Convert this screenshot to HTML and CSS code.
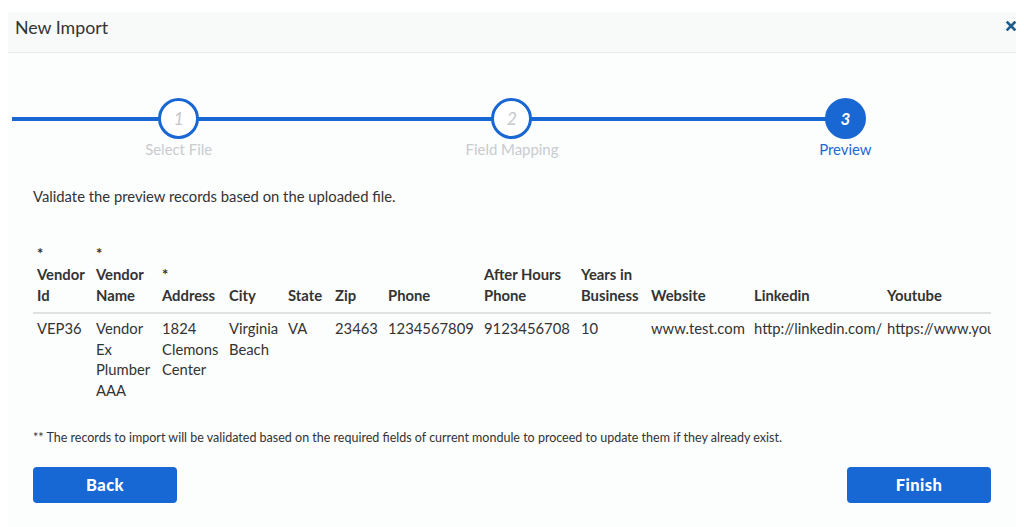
FILE: index.html
```html
<!DOCTYPE html>
<html lang="en">
<head>
<meta charset="utf-8">
<title>New Import</title>
<link rel="stylesheet" href="styles.css">
</head>
<body>
<div class="modal">
  <div class="modal-header">
    <h1 class="title">New Import</h1>
    <button class="close" aria-label="Close">
      <svg width="10" height="10" viewBox="0 0 10 10"><path d="M1.5 1.5 L8.5 8.5 M8.5 1.5 L1.5 8.5" stroke="#1f5c8c" stroke-width="2.6" stroke-linecap="square"/></svg>
    </button>
  </div>
  <div class="modal-body">
    <ol class="stepper">
      <li class="step"><span class="circle">1</span><span class="label">Select File</span></li>
      <li class="step"><span class="circle">2</span><span class="label">Field Mapping</span></li>
      <li class="step active"><span class="circle">3</span><span class="label">Preview</span></li>
    </ol>
    <p class="intro">Validate the preview records based on the uploaded file.</p>
    <div class="table-wrap">
      <table class="preview">
        <colgroup>
          <col class="c59"><col class="c66"><col class="c67"><col class="c59"><col class="c47"><col class="c53"><col class="c96"><col class="c97"><col class="c70"><col class="c103"><col class="c133"><col class="c180">
        </colgroup>
        <thead>
          <tr>
            <th>*<br>Vendor Id</th>
            <th>*<br>Vendor Name</th>
            <th>*<br>Address</th>
            <th>City</th>
            <th>State</th>
            <th>Zip</th>
            <th>Phone</th>
            <th>After Hours Phone</th>
            <th>Years in Business</th>
            <th>Website</th>
            <th>Linkedin</th>
            <th>Youtube</th>
          </tr>
        </thead>
        <tbody>
          <tr>
            <td>VEP36</td>
            <td>Vendor Ex Plumber AAA</td>
            <td>1824 Clemons Center</td>
            <td>Virginia Beach</td>
            <td>VA</td>
            <td>23463</td>
            <td>1234567809</td>
            <td>9123456708</td>
            <td>10</td>
            <td>www.test.com</td>
            <td>http://linkedin.com/</td>
            <td class="nowrap">https://www.youtube.com/</td>
          </tr>
        </tbody>
      </table>
    </div>
    <p class="note">** The records to import will be validated based on the required fields of current mondule to proceed to update them if they already exist.</p>
    <div class="actions">
      <button class="btn">Back</button>
      <button class="btn">Finish</button>
    </div>
  </div>
</div>
</body>
</html>
```
FILE: styles.css
```css
* { box-sizing: border-box; }
html, body { margin: 0; padding: 0; background: #ffffff; }
body {
  font-family: Lato, "Open Sans", "Noto Sans", sans-serif;
  color: #333;
  width: 1024px;
  height: 527px;
  overflow: hidden;
}
.modal {
  margin: 12px 0 0 8px;
  width: 1008px;
  background: #fcfdfd;
  height: 515px;
}
.modal-header {
  height: 41px;
  display: flex;
  align-items: flex-start;
  justify-content: space-between;
  padding: 4px 0 0 7px;
  background: #f8f9f9;
  border-bottom: 1px solid #e9ebeb;
}
.title {
  margin: 0;
  font-size: 17.8px;
  line-height: 22px;
  font-weight: 400;
  color: #333;
}
.close {
  border: 0;
  background: none;
  padding: 0;
  margin: 4px -1px 0 0;
  width: 12px;
  height: 12px;
  display: flex;
  align-items: center;
  justify-content: center;
}
.modal-body {
  padding: 0 25px;
}
.stepper {
  list-style: none;
  margin: 45px -21px 0 -21px;
  padding: 0;
  display: flex;
}
.step {
  flex: 1;
  position: relative;
  display: flex;
  flex-direction: column;
  align-items: center;
}
.step::before,
.step::after {
  content: "";
  position: absolute;
  top: 19px;
  height: 4px;
  background: #1967d2;
}
.step::before { left: 0; right: 50%; }
.step::after { left: 50%; right: 0; }
.step.active::after { display: none; }
.circle {
  position: relative;
  z-index: 1;
  width: 41px;
  height: 41px;
  border-radius: 50%;
  border: 3px solid #1967d2;
  background: #fff;
  display: flex;
  align-items: center;
  justify-content: center;
  font-style: italic;
  font-size: 17px;
  color: #c4c6c8;
}
.step.active .circle {
  background: #1967d2;
  color: #fff;
  font-weight: 700;
}
.label {
  margin-top: 0;
  font-size: 14.9px;
  line-height: 20px;
  color: #c9cbcd;
}
.step.active .label { color: #2369d2; }
.intro {
  margin: 27px 0 0 0;
  font-size: 14.8px;
  line-height: 20px;
  color: #333;
}
.table-wrap {
  margin-top: 37px;
  width: 958px;
  overflow: hidden;
}
.preview {
  table-layout: fixed;
  width: 1030px;
  border-collapse: collapse;
  font-size: 14.8px;
}
.c47 { width: 47px; }
.c53 { width: 53px; }
.c59 { width: 59px; }
.c66 { width: 66px; }
.c67 { width: 67px; }
.c70 { width: 70px; }
.c96 { width: 96px; }
.c97 { width: 97px; }
.c103 { width: 103px; }
.c133 { width: 133px; }
.c180 { width: 180px; }
.preview th {
  text-align: left;
  vertical-align: bottom;
  font-weight: 700;
  line-height: 21px;
  padding: 0 0 6px 4px;
  border-bottom: 2px solid #dfe1e2;
  color: #333;
}
.preview td {
  vertical-align: top;
  line-height: 20.7px;
  padding: 4px 0 0 4px;
  color: #333;
}
.preview td.nowrap { white-space: nowrap; }
.note {
  margin: 29px 0 0 0;
  font-size: 12.5px;
  line-height: 16px;
  color: #333;
}
.actions {
  margin-top: 21px;
  display: flex;
  justify-content: space-between;
}
.btn {
  width: 144px;
  height: 36px;
  border: 0;
  border-radius: 4px;
  background: #1767d4;
  color: #fff;
  font-family: Lato, "Open Sans", sans-serif;
  font-weight: 900;
  font-size: 16.5px;
  letter-spacing: 0.4px;
}
```
